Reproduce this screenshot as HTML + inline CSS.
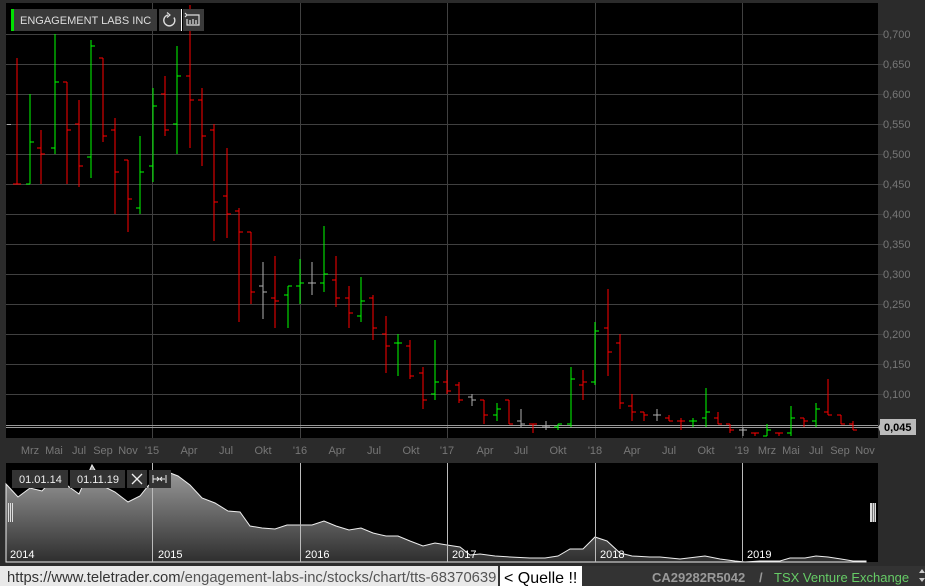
<!DOCTYPE html>
<html><head><meta charset="utf-8"><style>
html,body{margin:0;padding:0;background:#2b2b2b;width:925px;height:586px;overflow:hidden;font-family:"Liberation Sans",sans-serif}
svg{display:block}
</style></head><body>
<svg width="925" height="586" xmlns="http://www.w3.org/2000/svg" font-family="Liberation Sans, sans-serif">
<defs><linearGradient id="g" x1="0" y1="0" x2="0" y2="1"><stop offset="0" stop-color="#a0a0a0"/><stop offset="1" stop-color="#2e2e2e"/></linearGradient></defs>
<rect width="925" height="586" fill="#2b2b2b"/>
<rect x="6" y="3" width="872" height="435" fill="#000"/>
<g stroke="#404040" stroke-width="1">
<path d="M6 34.5H884M6 64.5H884M6 94.5H884M6 124.5H884M6 154.5H884M6 184.5H884M6 214.5H884M6 244.5H884M6 274.5H884M6 304.5H884M6 334.5H884M6 364.5H884M6 394.5H884"/>
<path d="M152.5 3V438M300.5 3V438M447.5 3V438M595.5 3V438M742.5 3V438"/>
</g>
<path d="M6 425.5H878M6 427.5H878" stroke="#999" stroke-width="1"/>
<path d="M7 124.5H11" stroke="#aaa"/>
<g fill="none" stroke-width="1" shape-rendering="crispEdges">
<path stroke="#00ff00" d="M30 94V184M26 184H30M30 142H34M55 34V154M51 148H55M55 82H59M91 40V178M87 157H91M91 46H95M140 136V214M136 208H140M140 172H144M153 88V182M149 166H153M153 106H157M177 46V154M173 124H177M177 76H181M288 286V328M284 295H288M288 286H292M300 259V304M296 286H300M300 283H304M324 226V292M320 283H324M324 274H328M361 277V322M357 316H361M361 301H365M398 334V376M394 343H398M398 343H402M435 340V400M431 394H435M435 382H439M497 403V421M493 415H497M497 409H501M558 424V430M554 427H558M558 424H562M571 367V427M567 424H571M571 379H575M595 322V385M591 382H595M595 331H599M693 418V427M689 421H693M693 421H697M706 388V427M702 418H706M706 412H710M767 424V436M763 436H767M767 430H771M791 406V436M787 433H791M791 418H795M816 403V427M812 421H816M816 409H820"/>
<path stroke="#ff0000" d="M17 58V184M13 184H17M17 184H21M41 130V184M37 148H41M41 154H45M67 82V184M63 82H67M67 130H71M79 100V187M75 124H79M79 166H83M103 58V142M99 58H103M103 136H107M115 118V214M111 130H115M115 172H119M128 160V232M124 160H128M128 199H132M165 76V136M161 94H165M165 130H169M190 5V148M186 76H190M190 100H194M202 88V166M198 100H202M202 136H206M214 124V241M210 130H214M214 202H218M227 148V238M223 196H227M227 214H231M239 208V322M235 211H239M239 232H243M251 232V304M247 232H251M251 292H255M275 256V328M271 298H275M275 301H279M336 256V307M332 280H336M336 298H340M349 286V328M345 298H349M349 313H353M373 295V340M369 298H373M373 328H377M386 316V373M382 334H386M386 346H390M410 340V379M406 346H410M410 376H414M423 367V409M419 373H423M423 400H427M447 370V394M443 382H447M447 391H451M459 382V403M455 385H459M459 400H463M484 400V424M480 400H484M484 415H488M509 400V424M505 400H509M509 424H513M533 424V433M529 424H533M533 424H537M583 370V400M579 385H583M583 382H587M608 289V376M604 328H608M608 352H612M620 334V409M616 343H620M620 403H624M632 394V421M628 406H632M632 412H636M644 412V421M640 412H644M644 415H648M669 415V421M665 418H669M669 421H673M681 418V430M677 421H681M681 421H685M718 412V424M714 418H718M718 424H722M730 424V433M726 424H730M730 430H734M755 433V436M751 433H755M755 433H759M779 433V436M775 433H779M779 433H783M804 418V427M800 418H804M804 421H808M828 379V415M824 412H828M828 415H832M841 415V424M837 415H841M841 424H845M853 421V430M849 424H853M853 430H857"/>
<path stroke="#b0b0b0" d="M263 262V319M259 286H263M263 292H267M312 262V295M308 283H312M312 283H316M472 394V406M468 397H472M472 400H476M521 409V427M517 421H521M521 424H525M546 421V430M542 427H546M546 427H550M657 409V421M653 415H657M657 415H661M743 427V436M739 430H743M743 430H747"/>
</g>
<!-- title -->
<rect x="11" y="9" width="146" height="22" fill="#3a3a3a"/>
<rect x="11" y="9" width="3" height="22" fill="#00e000"/>
<text x="20" y="24" font-size="11" fill="#ddd">ENGAGEMENT LABS INC</text>
<rect x="159" y="9" width="22" height="22" fill="#3a3a3a"/>
<rect x="183" y="9" width="21" height="22" fill="#3a3a3a"/>
<path d="M181.5 9V31" stroke="#fff"/>
<path d="M174 17.5A5.5 5.5 0 1 1 168 15" fill="none" stroke="#ddd" stroke-width="1.4"/>
<path d="M167 12.5L170 15L167 17.5" fill="none" stroke="#ddd" stroke-width="1.2"/>
<path d="M187 15H199V25H187V19M185 17L187 15M185 13L187 15M190 24V20M193 24V19M196 24V20" fill="none" stroke="#ddd" stroke-width="1.2"/>
<!-- price axis -->
<g font-size="11" fill="#777">
<text x="883" y="38">0,700</text><text x="883" y="68">0,650</text><text x="883" y="98">0,600</text><text x="883" y="128">0,550</text><text x="883" y="158">0,500</text><text x="883" y="188">0,450</text><text x="883" y="218">0,400</text><text x="883" y="248">0,350</text><text x="883" y="278">0,300</text><text x="883" y="308">0,250</text><text x="883" y="338">0,200</text><text x="883" y="368">0,150</text><text x="883" y="398">0,100</text>
</g>
<path d="M878 427L881 423V434Z" fill="#bbb"/>
<rect x="880" y="419" width="36" height="16" fill="#bbb"/>
<text x="884" y="431" font-size="11" font-weight="bold" fill="#000">0,045</text>
<!-- x axis -->
<g font-size="11" fill="#777" text-anchor="middle">
<text x="30" y="454">Mrz</text><text x="54" y="454">Mai</text><text x="79" y="454">Jul</text><text x="103" y="454">Sep</text><text x="128" y="454">Nov</text><text x="152" y="454">'15</text><text x="189" y="454">Apr</text><text x="226" y="454">Jul</text><text x="263" y="454">Okt</text><text x="300" y="454">'16</text><text x="337" y="454">Apr</text><text x="374" y="454">Jul</text><text x="411" y="454">Okt</text><text x="447" y="454">'17</text><text x="485" y="454">Apr</text><text x="521" y="454">Jul</text><text x="558" y="454">Okt</text><text x="595" y="454">'18</text><text x="632" y="454">Apr</text><text x="669" y="454">Jul</text><text x="706" y="454">Okt</text><text x="742" y="454">'19</text><text x="767" y="454">Mrz</text><text x="791" y="454">Mai</text><text x="816" y="454">Jul</text><text x="840" y="454">Sep</text><text x="865" y="454">Nov</text>
</g>
<!-- navigator -->
<rect x="6" y="463" width="872" height="99" fill="#000"/>
<path d="M6 484L18 497L30 488L42 491L55 477L68 486L79 494L92 465L105 487L115 492L128 502L140 496L148 486L155 480L165 471L178 476L190 485L202 498L215 503L228 511L240 512L250 526L262 528L275 529L287 525L300 525L312 525L324 521L336 526L349 530L361 528L373 533L386 536L398 536L410 541L423 546L435 543L447 545L460 547L470 555L480 554L495 556L510 557L530 558L545 558L558 556L570 549L583 549L595 537L607 541L620 553L632 556L650 557L660 557L680 559L705 556L720 559L735 561L745 562L760 561L780 561L790 558L805 558L816 556L828 557L841 559L853 561L866 561L866 562L6 562Z" fill="url(#g)" stroke="#eee" stroke-width="1"/>
<path d="M152.5 463V562M300.5 463V562M447.5 463V562M595.5 463V562M742.5 463V562" stroke="#bbb"/>
<g font-size="11" fill="#fff">
<text x="10" y="558">2014</text><text x="158" y="558">2015</text><text x="305" y="558">2016</text><text x="452" y="558">2017</text><text x="600" y="558">2018</text><text x="747" y="558">2019</text>
</g>
<rect x="12" y="470" width="56" height="18" fill="#333"/>
<rect x="70" y="470" width="55" height="18" fill="#333"/>
<rect x="127" y="470" width="20" height="18" fill="#333"/>
<rect x="149" y="470" width="22" height="18" fill="#333"/>
<g font-size="11" fill="#eee"><text x="19" y="483">01.01.14</text><text x="77" y="483">01.11.19</text></g>
<path d="M132 474L142 484M142 474L132 484" stroke="#eee" stroke-width="1.3"/>
<path d="M153 475V483M153 479H158M157 477L159 479L157 481M166 475V483M165 479H161M162 477L160 479L162 481" stroke="#eee" stroke-width="1" fill="none"/>
<path d="M8.5 503V522M10.5 503V522M12.5 503V522" stroke="#ddd"/>
<rect x="870" y="503" width="6" height="19" fill="#ddd"/><path d="M872.5 503V522M874.5 503V522" stroke="#777"/>
<!-- bottom bar -->
<rect x="0" y="566" width="925" height="20" fill="#333"/>
<rect x="0" y="566" width="498" height="20" fill="#e9e9e9"/>
<rect x="500" y="566" width="82" height="20" fill="#fff"/>
<text x="7" y="582" font-size="14.8" fill="#555"><tspan fill="#333">https://www.teletrader.com</tspan>/engagement-labs-inc/stocks/chart/tts-68370639</text>
<text x="504" y="583" font-size="16" fill="#000">&lt; Quelle !!</text>
<text x="652" y="582" font-size="13" font-weight="bold" fill="#999">CA29282R5042</text>
<text x="759" y="582" font-size="13" font-weight="bold" fill="#999">/</text>
<text x="774" y="582" font-size="13" fill="#6c6">TSX Venture Exchange</text>
<path d="M919 573L922 569L925 573ZM919 578L922 582L925 578Z" fill="#ccc"/>
</svg>
</body></html>
